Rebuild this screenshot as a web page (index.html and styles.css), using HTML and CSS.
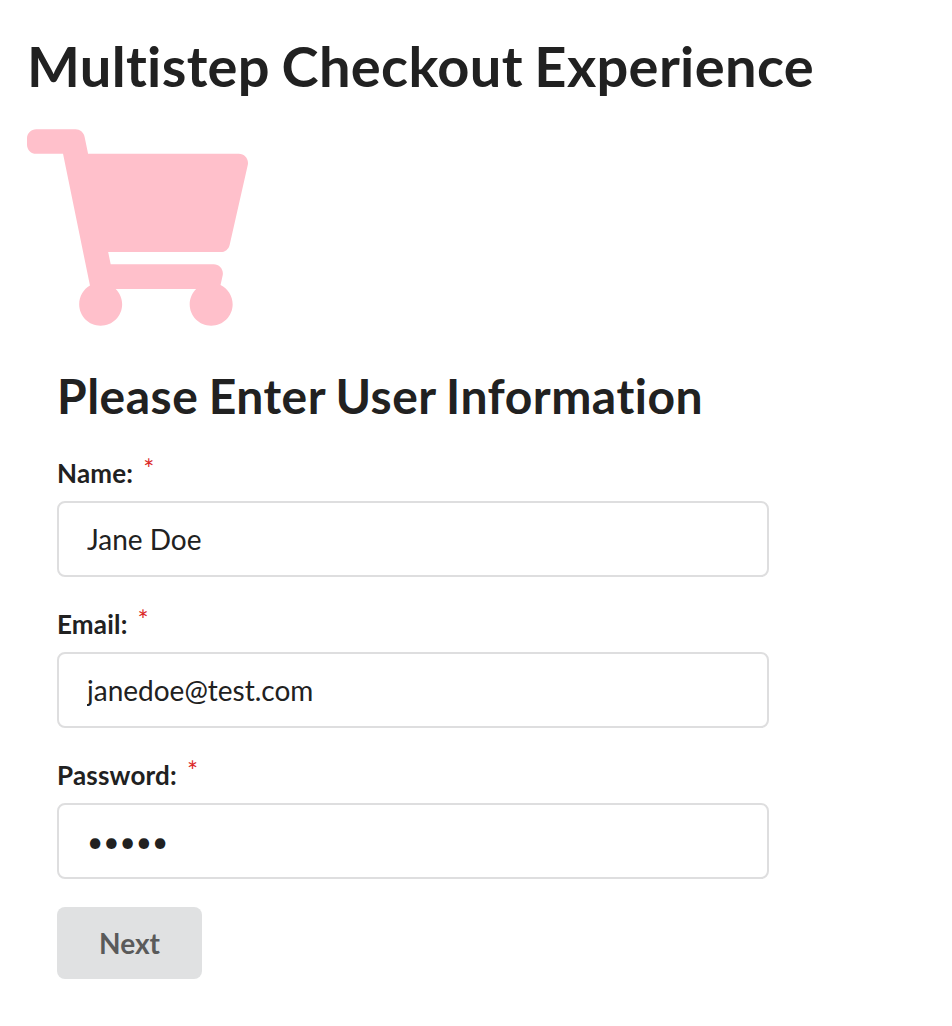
FILE: index.html
```html
<!DOCTYPE html>
<html lang="en">
<head>
<meta charset="utf-8">
<title>Multistep Checkout Experience</title>
<link rel="stylesheet" href="styles.css">
</head>
<body>
<main class="page">
  <h1 class="title">Multistep Checkout Experience</h1>
  <svg class="cart" viewBox="0 0 576 512" aria-hidden="true"><path d="M528.12 301.319l47.273-208C578.806 78.301 567.391 64 551.99 64H159.208l-9.166-44.81C147.758 8.021 137.93 0 126.529 0H24C10.745 0 0 10.745 0 24v16c0 13.255 10.745 24 24 24h69.883l70.248 343.435C147.325 417.1 136 435.222 136 456c0 30.928 25.072 56 56 56s56-25.072 56-56c0-15.674-6.447-29.835-16.824-40h209.647C430.447 426.165 424 440.326 424 456c0 30.928 25.072 56 56 56s56-25.072 56-56c0-22.172-12.888-41.332-31.579-50.405l5.517-24.276c3.413-15.018-8.002-29.319-23.403-29.319H218.117l-6.545-32h293.145c11.206 0 20.92-7.754 23.403-18.681z"/></svg>
  <form class="form">
    <h2 class="heading">Please Enter User Information</h2>
    <div class="field">
      <label class="label" for="name">Name:<span class="star">*</span></label>
      <input class="input" id="name" type="text" value="Jane Doe">
    </div>
    <div class="field">
      <label class="label" for="email">Email:<span class="star">*</span></label>
      <input class="input" id="email" type="text" value="janedoe@test.com">
    </div>
    <div class="field">
      <label class="label" for="password">Password:<span class="star">*</span></label>
      <input class="input" id="password" type="password" value="12345">
    </div>
    <button class="button" type="button">Next</button>
  </form>
</main>
</body>
</html>
```
FILE: styles.css
```css
* { box-sizing: border-box; }
body { margin: 0; background: #fff; color: #212121; font-family: Lato, sans-serif; font-variant-ligatures: none; }
.page { padding: 30px 27px 0; }
.title { margin: 0; font-size: 56px; line-height: 72px; font-weight: 700; letter-spacing: 0.35px; word-spacing: -2.5px; white-space: nowrap; }
.cart { display: block; width: 221px; height: 197px; margin-top: 27px; fill: #ffc0cb; }
.form { width: 712px; margin: 39px 0 0 30px; }
.heading { margin: 0 0 27px; font-size: 48px; line-height: 62px; font-weight: 700; letter-spacing: 0.5px; word-spacing: -1.8px; white-space: nowrap; }
.field { margin-bottom: 28px; }
.label { display: block; height: 39px; margin-bottom: 8px; font-size: 26px; line-height: 39px; font-weight: 700; letter-spacing: 0.2px; }
.star { margin-left: 10px; color: #db2828; font-weight: 400; position: relative; top: -4px; }
.input { display: block; width: 100%; height: 76px; padding: 0 28px; border: 2px solid #dededf; border-radius: 8px; background: #fff; color: #212121; font: 28px/34px Lato, sans-serif; outline: 0; }
.button { display: block; width: 145px; height: 72px; padding: 0; border: 0; border-radius: 8px; background: #e0e1e2; color: #5a5a5a; font: 700 28px/28px Lato, sans-serif; }
```
